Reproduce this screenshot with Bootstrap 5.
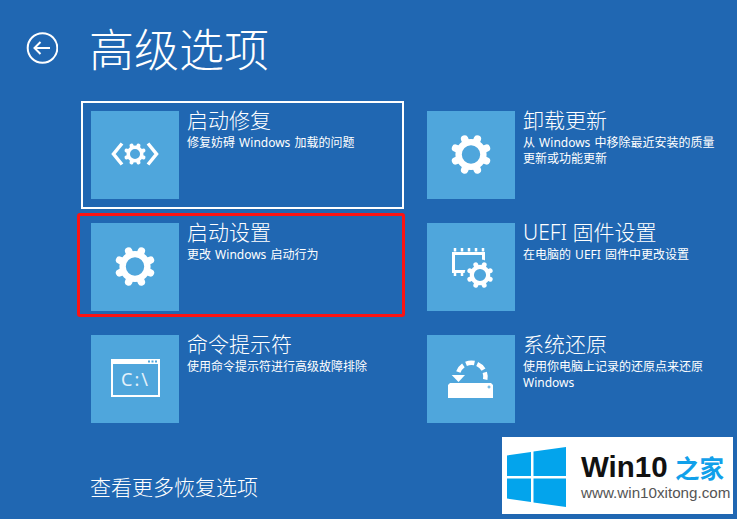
<!DOCTYPE html>
<html lang="zh-CN">
<head>
<meta charset="utf-8">
<title>高级选项</title>
<link href="https://cdn.jsdelivr.net/npm/bootstrap@5.3.0/dist/css/bootstrap.min.css" rel="stylesheet">
<style>
html,body{height:100%;}
body{background:#2067b2;color:#fff;overflow:hidden;font-family:"Noto Sans","Noto Sans CJK SC",sans-serif;}
.stage{width:737px;height:519px;padding:25px 0 0 26px;}
.back-ico{width:32px;height:32px;}
.page-title{font-size:45px;line-height:45px;font-weight:300;margin:0 0 0 31px;font-family:"Noto Sans CJK SC",sans-serif;}
.opt-grid{display:grid;grid-template-columns:323px 323px;column-gap:13px;row-gap:4px;margin:31px 0 0 55px;}
.opt{height:108px;border:2px solid transparent;padding:8px;gap:8px;position:relative;}
.opt-sel{border-color:#fff;}
.opt-mark::after{content:"";position:absolute;left:-6px;right:-3px;top:-2px;bottom:2px;border:3px solid #fb1313;border-radius:3px;}
.tile{width:88px;height:88px;flex:none;background:#4fa6dc;}
.tile svg{width:88px;height:88px;display:block;}
.opt-name{font-size:21px;line-height:22px;font-weight:300;margin:-2px 0 0;font-family:"Noto Sans","Noto Sans CJK SC",sans-serif;}
.opt-desc{font-size:12px;line-height:16px;margin:4px 0 0;max-width:198px;word-spacing:1px;font-family:"Noto Sans","Noto Sans CJK SC",sans-serif;}
.more{font-size:21px;line-height:24px;margin:42px 0 0 64px;font-weight:300;}
.cmd-txt{font-family:"Noto Sans",sans-serif;font-size:18px;letter-spacing:2px;fill:#e4f1fa;}
.mark-box{position:absolute;left:502px;top:437px;width:231px;height:77px;background:#fff;}
.win-logo{position:absolute;left:4px;top:10px;width:62px;height:60px;}
.mark-a{position:absolute;left:79px;top:12px;color:#111;font:700 29.5px/36px "Liberation Sans",sans-serif;}
.mark-b{position:absolute;left:173px;top:16px;color:#11a0ea;font:700 24.5px/30px "Noto Sans CJK SC",sans-serif;}
.mark-c{position:absolute;left:79px;top:46px;color:#555;font:15.2px/20px "Liberation Sans",sans-serif;}
</style>
</head>
<body>
<svg width="0" height="0" class="position-absolute">
<defs>
<symbol id="gear" viewBox="-22 -22 44 44" overflow="visible">
<circle r="12.400" fill="none" stroke="#fff" stroke-width="6.400"/>
<g stroke="#fff" stroke-width="7.400" stroke-linecap="round">
<path d="M5.700 13.800L6.400 15.500M13.800 5.700L15.500 6.400M13.800 -5.700L15.500 -6.400M5.700 -13.800L6.400 -15.500M-5.700 -13.800L-6.400 -15.500M-13.800 -5.700L-15.500 -6.400M-13.800 5.700L-15.500 6.400M-5.700 13.800L-6.400 15.500"/>
</g>
</symbol>
</defs>
</svg>
<div class="stage d-flex flex-column">
<div class="d-flex align-items-center">
<svg class="back-ico" viewBox="0 0 32 32" fill="none" stroke="#fff"><circle cx="16.500" cy="16" r="14.800" stroke-width="2"/><path d="M8.500 16H24M14.500 10L8.500 16L14.500 22" stroke-width="2"/></svg>
<h1 class="page-title">高级选项</h1>
</div>
<div class="opt-grid">
<div class="opt opt-sel d-flex">
<div class="tile"><svg viewBox="0 0 88 88"><path d="M31 32.500L22.500 43L31 53.500M57 32.500L65.500 43L57 53.500" fill="none" stroke="#fff" stroke-width="3.500"/><use href="#gear" x="32" y="31" width="24" height="24"/></svg></div>
<div><h2 class="opt-name">启动修复</h2><p class="opt-desc">修复妨碍 Windows 加载的问题</p></div>
</div>
<div class="opt d-flex">
<div class="tile"><svg viewBox="0 0 88 88"><use href="#gear" x="22" y="21.500" width="44" height="44"/></svg></div>
<div><h2 class="opt-name">卸载更新</h2><p class="opt-desc">从 Windows 中移除最近安装的质量更新或功能更新</p></div>
</div>
<div class="opt opt-mark d-flex">
<div class="tile"><svg viewBox="0 0 88 88"><use href="#gear" x="22" y="21.500" width="44" height="44"/></svg></div>
<div><h2 class="opt-name">启动设置</h2><p class="opt-desc">更改 Windows 启动行为</p></div>
</div>
<div class="opt d-flex">
<div class="tile"><svg viewBox="0 0 88 88">
<rect x="26.500" y="30.500" width="30" height="18" fill="none" stroke="#fff" stroke-width="3"/>
<path d="M28 25v3.500M35 25v3.500M42 25v3.500M49 25v3.500M56 25v3.500M28 50v3M35 50v3M42 50v3" stroke="#fff" stroke-width="2.500"/>
<circle cx="53" cy="52" r="15.500" fill="#4fa6dc"/>
<use href="#gear" x="38.500" y="37.500" width="29" height="29"/></svg></div>
<div><h2 class="opt-name">UEFI 固件设置</h2><p class="opt-desc">在电脑的 UEFI 固件中更改设置</p></div>
</div>
<div class="opt d-flex">
<div class="tile"><svg viewBox="0 0 88 88">
<rect x="21" y="25" width="47" height="36" fill="none" stroke="#fff" stroke-width="2"/>
<rect x="21" y="24" width="47" height="5" fill="#fff"/>
<path d="M57 26.500h2M60.500 26.500h2M64 26.500h2" stroke="#4fa6dc" stroke-width="2"/>
<text class="cmd-txt" x="30" y="51">C:\</text></svg></div>
<div><h2 class="opt-name">命令提示符</h2><p class="opt-desc">使用命令提示符进行高级故障排除</p></div>
</div>
<div class="opt d-flex">
<div class="tile"><svg viewBox="0 0 88 88">
<path d="M23 48h41l2 2v13H21V50z" fill="#fff"/>
<path d="M62 50.500v3M60.500 52h3" stroke="#4fa6dc" stroke-width="1"/>
<path d="M31.300 37A14 14 0 0 1 58.200 44.500" fill="none" stroke="#fff" stroke-width="4.500" stroke-dasharray="8.500 3"/>
<path d="M24.700 40H38L31.500 47z" fill="#fff"/></svg></div>
<div><h2 class="opt-name">系统还原</h2><p class="opt-desc">使用你电脑上记录的还原点来还原 Windows</p></div>
</div>
</div>
<div class="more">查看更多恢复选项</div>
</div>
<div class="mark-box">
<svg class="win-logo" viewBox="0 0 62 60" fill="#03a4ec"><path d="M1 8.500L25 5V29H1zM27.500 4.500L60 0V29H27.500zM1 31.500H25V55L1 51.500zM27.500 31.500H60V60L27.500 55.500z"/></svg>
<span class="mark-a">Win10</span><span class="mark-b">之家</span><span class="mark-c">www.win10xitong.com</span>
</div>
</body>
</html>
